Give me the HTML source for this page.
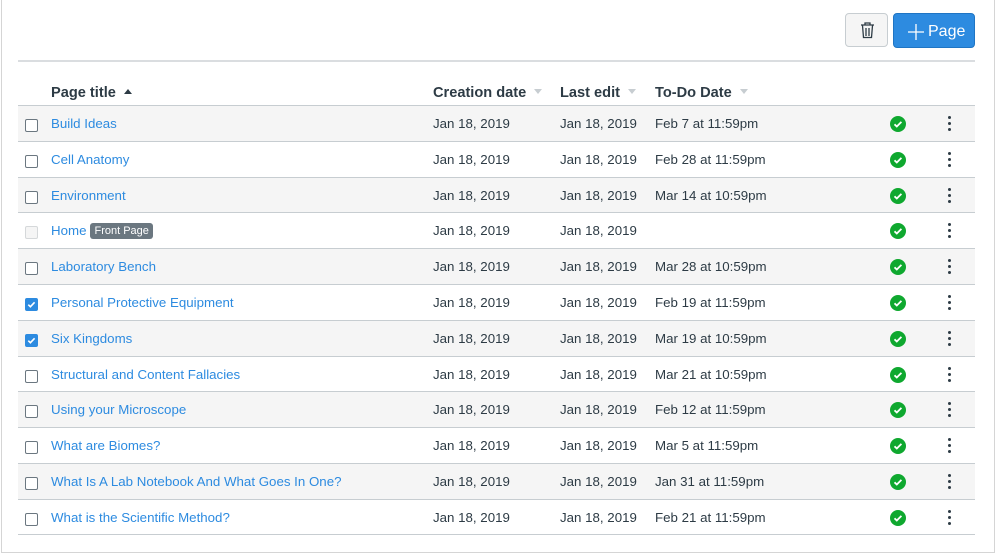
<!DOCTYPE html>
<html><head><style>
body{margin:0;width:999px;height:556px;background:#fff;font-family:"Liberation Sans",sans-serif;position:relative;overflow:hidden}
.frame{position:absolute;left:1px;top:-1px;width:992px;height:553px;border:1px solid #d5d5d5;border-top:none;background:#fff}
.btn-del{position:absolute;left:845px;top:13px;width:43px;height:34px;border:1px solid #c7cdd1;border-radius:4px;background:#f5f5f5;box-sizing:border-box}
.btn-add{position:absolute;left:893px;top:13px;width:82px;height:35px;border-radius:4px;background:#2d8be0;color:#fff;font-size:16px;line-height:35px;box-sizing:border-box;border:1px solid #1f75c4}
.hline{position:absolute;left:18px;width:957px;height:2px;background:#dadde0;top:60px}
.th{position:absolute;top:85px;font-size:14.6px;font-weight:bold;color:#2d3b45;white-space:nowrap}
.caret{display:inline-block;width:0;height:0;border-left:4px solid transparent;border-right:4px solid transparent;margin-left:8px;vertical-align:3px}
.up{border-bottom:5px solid #2d3b45}
.dn{border-top:5px solid #c7cdd1}
.row{position:absolute;left:18px;width:957px;height:35.8px;border-top:1px solid #c7cdd1;box-sizing:border-box;font-size:13.3px;color:#2d3b45}
.row.g{background:#f5f5f5}
.row span{position:absolute;top:10px;white-space:nowrap}
.cb{position:absolute;left:7px;top:13px;width:11px;height:11px;border:1px solid #6b7780;border-radius:2px;background:#fff}
.cb.dis{border-color:#d5d8da;background:#f5f5f5}
.cb.on{background:#2d8be0;border-color:#2d8be0}
.t{left:33px;color:#2d8be0}
.c1{left:415px}.c2{left:542px}.c3{left:637px}
.ok{position:absolute;left:872px;top:10px;width:16px;height:16px;border-radius:50%;background:#0fa82f}
.dots{position:absolute;left:930px;top:10px;width:3px}
.dots i{display:block;width:3px;height:3px;border-radius:50%;background:#2d3b45;margin-bottom:3px}
.row span.badge{position:static;background:#6b7780;color:#fff;font-size:11px;padding:2px 4px;border-radius:3px;margin-left:4px;vertical-align:1px}
</style></head><body>
<div class="frame"></div>
<div class="btn-del"><svg width="43" height="34" viewBox="0 0 43 34"><g fill="none" stroke="#2d3b45" stroke-width="1.3"><path d="M15 11h13M19 11V9h5v2M16.5 11.5l1 12h8l1-12"/><path d="M20 14v8M23 14v8"/></g></svg></div>
<div class="btn-add"><svg width="20" height="20" viewBox="0 0 20 20" style="position:absolute;left:12px;top:8px"><path d="M10 2v16M2 10h16" stroke="#fff" stroke-width="1.3"/></svg><span style="position:absolute;left:34px">Page</span></div>
<div class="hline"></div>
<div class="th" style="left:51px">Page title<span class="caret up"></span></div>
<div class="th" style="left:433px">Creation date<span class="caret dn"></span></div>
<div class="th" style="left:560px">Last edit<span class="caret dn"></span></div>
<div class="th" style="left:655px">To-Do Date<span class="caret dn"></span></div>

<div class="row g" style="top:105px"><div class="cb"></div><span class="t">Build Ideas</span><span class="c1">Jan 18, 2019</span><span class="c2">Jan 18, 2019</span><span class="c3">Feb 7 at 11:59pm</span><svg class="ok" viewBox="0 0 16 16"><path d="M4.5 8.3l2.3 2.2 4.6-4.6" stroke="#fff" stroke-width="1.8" fill="none"/></svg><div class="dots"><i></i><i></i><i></i></div></div>
<div class="row" style="top:140.8px"><div class="cb"></div><span class="t">Cell Anatomy</span><span class="c1">Jan 18, 2019</span><span class="c2">Jan 18, 2019</span><span class="c3">Feb 28 at 11:59pm</span><svg class="ok" viewBox="0 0 16 16"><path d="M4.5 8.3l2.3 2.2 4.6-4.6" stroke="#fff" stroke-width="1.8" fill="none"/></svg><div class="dots"><i></i><i></i><i></i></div></div>
<div class="row g" style="top:176.6px"><div class="cb"></div><span class="t">Environment</span><span class="c1">Jan 18, 2019</span><span class="c2">Jan 18, 2019</span><span class="c3">Mar 14 at 10:59pm</span><svg class="ok" viewBox="0 0 16 16"><path d="M4.5 8.3l2.3 2.2 4.6-4.6" stroke="#fff" stroke-width="1.8" fill="none"/></svg><div class="dots"><i></i><i></i><i></i></div></div>
<div class="row" style="top:212.4px"><div class="cb dis"></div><span class="t">Home<span class="badge">Front Page</span></span><span class="c1">Jan 18, 2019</span><span class="c2">Jan 18, 2019</span><svg class="ok" viewBox="0 0 16 16"><path d="M4.5 8.3l2.3 2.2 4.6-4.6" stroke="#fff" stroke-width="1.8" fill="none"/></svg><div class="dots"><i></i><i></i><i></i></div></div>
<div class="row g" style="top:248.2px"><div class="cb"></div><span class="t">Laboratory Bench</span><span class="c1">Jan 18, 2019</span><span class="c2">Jan 18, 2019</span><span class="c3">Mar 28 at 10:59pm</span><svg class="ok" viewBox="0 0 16 16"><path d="M4.5 8.3l2.3 2.2 4.6-4.6" stroke="#fff" stroke-width="1.8" fill="none"/></svg><div class="dots"><i></i><i></i><i></i></div></div>
<div class="row" style="top:284px"><svg class="cb on" viewBox="0 0 11 11"><path d="M2.3 5.7l2.1 2 4.2-4.4" stroke="#fff" stroke-width="1.6" fill="none"/></svg><span class="t">Personal Protective Equipment</span><span class="c1">Jan 18, 2019</span><span class="c2">Jan 18, 2019</span><span class="c3">Feb 19 at 11:59pm</span><svg class="ok" viewBox="0 0 16 16"><path d="M4.5 8.3l2.3 2.2 4.6-4.6" stroke="#fff" stroke-width="1.8" fill="none"/></svg><div class="dots"><i></i><i></i><i></i></div></div>
<div class="row g" style="top:319.8px"><svg class="cb on" viewBox="0 0 11 11"><path d="M2.3 5.7l2.1 2 4.2-4.4" stroke="#fff" stroke-width="1.6" fill="none"/></svg><span class="t">Six Kingdoms</span><span class="c1">Jan 18, 2019</span><span class="c2">Jan 18, 2019</span><span class="c3">Mar 19 at 10:59pm</span><svg class="ok" viewBox="0 0 16 16"><path d="M4.5 8.3l2.3 2.2 4.6-4.6" stroke="#fff" stroke-width="1.8" fill="none"/></svg><div class="dots"><i></i><i></i><i></i></div></div>
<div class="row" style="top:355.6px"><div class="cb"></div><span class="t">Structural and Content Fallacies</span><span class="c1">Jan 18, 2019</span><span class="c2">Jan 18, 2019</span><span class="c3">Mar 21 at 10:59pm</span><svg class="ok" viewBox="0 0 16 16"><path d="M4.5 8.3l2.3 2.2 4.6-4.6" stroke="#fff" stroke-width="1.8" fill="none"/></svg><div class="dots"><i></i><i></i><i></i></div></div>
<div class="row g" style="top:391.4px"><div class="cb"></div><span class="t">Using your Microscope</span><span class="c1">Jan 18, 2019</span><span class="c2">Jan 18, 2019</span><span class="c3">Feb 12 at 11:59pm</span><svg class="ok" viewBox="0 0 16 16"><path d="M4.5 8.3l2.3 2.2 4.6-4.6" stroke="#fff" stroke-width="1.8" fill="none"/></svg><div class="dots"><i></i><i></i><i></i></div></div>
<div class="row" style="top:427.2px"><div class="cb"></div><span class="t">What are Biomes?</span><span class="c1">Jan 18, 2019</span><span class="c2">Jan 18, 2019</span><span class="c3">Mar 5 at 11:59pm</span><svg class="ok" viewBox="0 0 16 16"><path d="M4.5 8.3l2.3 2.2 4.6-4.6" stroke="#fff" stroke-width="1.8" fill="none"/></svg><div class="dots"><i></i><i></i><i></i></div></div>
<div class="row g" style="top:463px"><div class="cb"></div><span class="t">What Is A Lab Notebook And What Goes In One?</span><span class="c1">Jan 18, 2019</span><span class="c2">Jan 18, 2019</span><span class="c3">Jan 31 at 11:59pm</span><svg class="ok" viewBox="0 0 16 16"><path d="M4.5 8.3l2.3 2.2 4.6-4.6" stroke="#fff" stroke-width="1.8" fill="none"/></svg><div class="dots"><i></i><i></i><i></i></div></div>
<div class="row" style="top:498.8px;border-bottom:1px solid #c7cdd1;height:36.6px"><div class="cb"></div><span class="t">What is the Scientific Method?</span><span class="c1">Jan 18, 2019</span><span class="c2">Jan 18, 2019</span><span class="c3">Feb 21 at 11:59pm</span><svg class="ok" viewBox="0 0 16 16"><path d="M4.5 8.3l2.3 2.2 4.6-4.6" stroke="#fff" stroke-width="1.8" fill="none"/></svg><div class="dots"><i></i><i></i><i></i></div></div>
</body></html>
